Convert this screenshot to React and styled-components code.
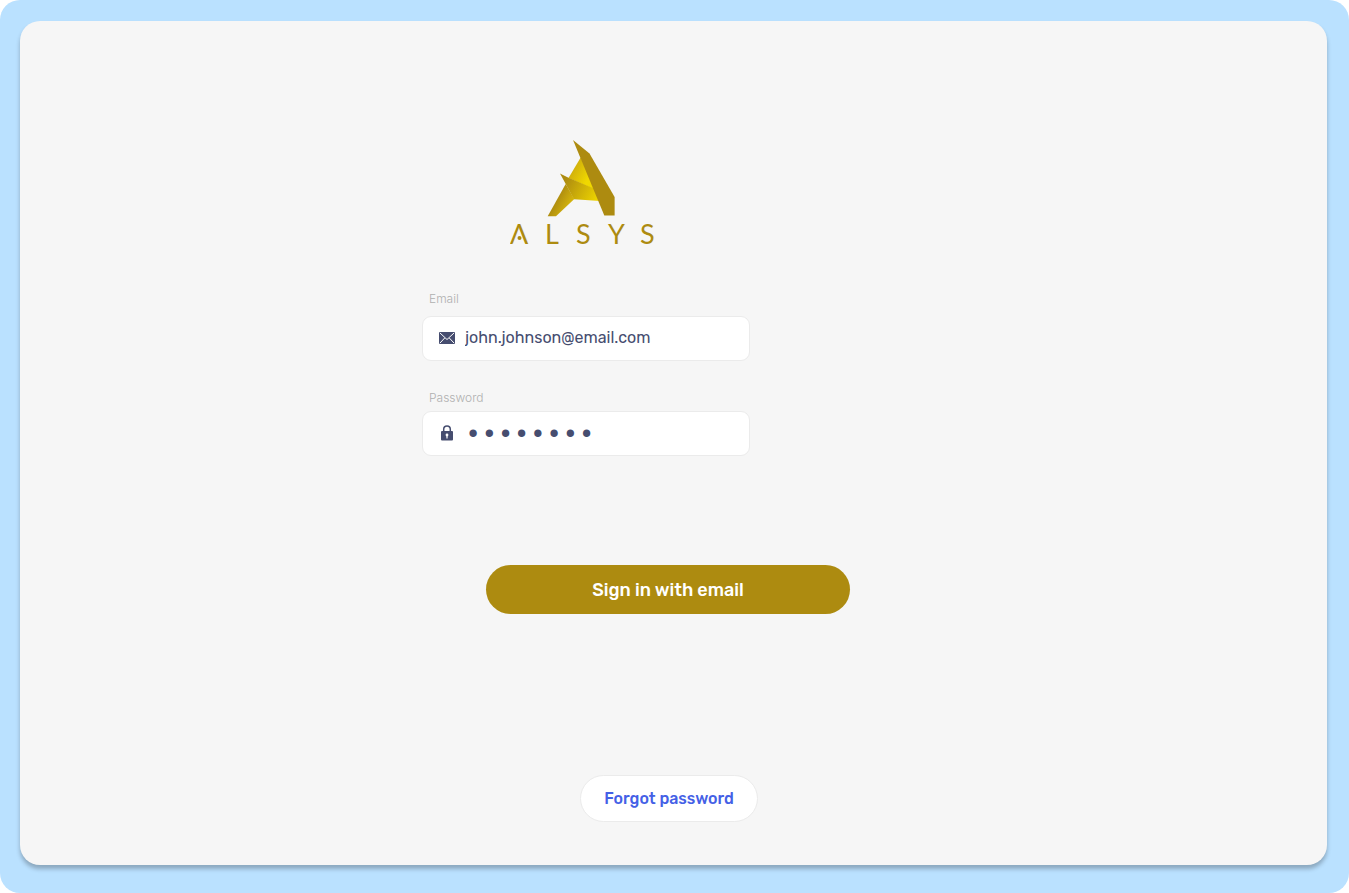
import React from "react";
import styled, { createGlobalStyle } from "styled-components";

const GlobalStyle = createGlobalStyle`
  *, *::before, *::after { box-sizing: border-box; }
  body {
    margin: 0;
    background: #ffffff;
    font-family: Rubik, Roboto, sans-serif;
  }
`;

const Frame = styled.div`
  display: flex;
  min-height: 100vh;
  padding: 21px 22px 28px 20px;
  border-radius: 20px;
  background: #bae1ff;
`;

const Panel = styled.main`
  flex: 1;
  display: flex;
  flex-direction: column;
  align-items: center;
  padding: 118px 24px 43px;
  border-radius: 20px;
  background: #f6f6f6;
  box-shadow: 0 4px 4px rgba(0, 0, 0, 0.25);
`;

const Form = styled.form`
  display: flex;
  flex-direction: column;
  align-items: flex-start;
  width: 100%;
  max-width: 503px;
`;

const Logo = styled.svg`
  display: block;
  width: 150px;
  height: 115px;
  margin: 0 0 36px 88px;
`;

const Wordmark = styled.text`
  fill: #ad8b10;
  font-family: Lato, sans-serif;
  font-size: 27px;
`;

const Field = styled.div`
  display: flex;
  flex-direction: column;
  gap: ${(p) => p.$gap};
  width: 100%;
  max-width: 328px;
  margin-bottom: ${(p) => p.$after};
`;

const Label = styled.label`
  padding-left: 7px;
  color: #b0b0b0;
  font-family: Inter, sans-serif;
  font-size: 12px;
  font-weight: 300;
  line-height: 18px;
`;

const InputBox = styled.div`
  display: flex;
  align-items: center;
  gap: 10px;
  height: 45px;
  padding: 0 16px 2px;
  border: 1px solid #ebebeb;
  border-radius: 9px;
  background: #ffffff;
`;

const FieldIcon = styled.svg`
  flex: none;
  width: 16px;
  height: 16px;
  fill: #464d6f;
`;

const Input = styled.input`
  flex: 1;
  min-width: 0;
  height: 40px;
  padding: 0;
  border: 0;
  outline: 0;
  background: transparent;
  color: #464d6f;
  font-family: inherit;
  font-size: 16px;

  &[type="password"] {
    padding-top: 4px;
    font-family: "Liberation Mono", monospace;
    font-size: 27px;
  }
`;

const Button = styled.button`
  border: 0;
  border-radius: 25px;
  font-family: inherit;
  font-weight: 500;
  cursor: pointer;
`;

const SignInButton = styled(Button)`
  width: 364px;
  height: 49px;
  margin: 109px 0 161px 64px;
  background: #ad8b10;
  color: #ffffff;
  font-size: 18px;
`;

const ForgotButton = styled(Button)`
  width: 178px;
  height: 47px;
  margin-left: 158px;
  border: 1px solid #ebebeb;
  background: #ffffff;
  color: #4460e6;
  font-size: 16px;
`;

function AlsysLogo() {
  return (
    <Logo viewBox="0 0 150 115" role="img" aria-label="ALSYS">
      <defs>
        <linearGradient id="back" x1="60" y1="30" x2="78" y2="40" gradientUnits="userSpaceOnUse">
          <stop offset="0" stopColor="#cdab0d" />
          <stop offset="1" stopColor="#f0d800" />
        </linearGradient>
        <linearGradient id="wing" x1="54" y1="42" x2="88" y2="60" gradientUnits="userSpaceOnUse">
          <stop offset="0" stopColor="#ad8b10" />
          <stop offset="1" stopColor="#eed500" />
        </linearGradient>
        <linearGradient id="leg" x1="46" y1="60" x2="59" y2="67" gradientUnits="userSpaceOnUse">
          <stop offset="0" stopColor="#ad8b10" />
          <stop offset="1" stopColor="#d3b30c" />
        </linearGradient>
      </defs>
      <path d="M70.7 18.5 L86 51 L58.5 39 Z" fill="url(#back)" />
      <path d="M55.7 45 L64.3 60 L46 77.3 H37.7 Z" fill="url(#leg)" />
      <path d="M50 34.5 L58.5 38.8 L84 49.6 L90 62 L64 60.2 Z" fill="url(#wing)" />
      <path d="M63 1 L79.5 14.5 L104.6 58 V76.6 H94.3 Z" fill="#ad8b10" />
      <Wordmark x="0 35 66 98 130" y="105">ΛLSYS</Wordmark>
      <circle cx="9.5" cy="99" r="2" fill="#ad8b10" />
    </Logo>
  );
}

function MailIcon() {
  return (
    <FieldIcon viewBox="0 0 16 16" aria-hidden="true">
      <rect y="2" width="16" height="12" rx="1" />
      <path
        d="M1 3 L8 9.5 L15 3 M1 13 L5.7 8 M15 13 L10.3 8"
        fill="none"
        stroke="#ffffff"
        strokeWidth="1"
      />
    </FieldIcon>
  );
}

function LockIcon() {
  return (
    <FieldIcon viewBox="0 0 16 16" aria-hidden="true">
      <path d="M4.7 7 V4.3 a3.3 3.3 0 0 1 6.6 0 V7" fill="none" stroke="#464d6f" strokeWidth="1.5" />
      <rect x="2" y="6" width="12" height="9.5" rx="1" />
      <circle cx="8" cy="10" r="1.4" fill="#ffffff" />
      <rect x="7.4" y="10" width="1.2" height="3.5" fill="#ffffff" />
    </FieldIcon>
  );
}

export default function App() {
  return (
    <>
      <GlobalStyle />
      <Frame>
        <Panel>
          <Form onSubmit={(e) => e.preventDefault()}>
            <AlsysLogo />
            <Field $gap="8px" $after="28px">
              <Label htmlFor="email">Email</Label>
              <InputBox>
                <MailIcon />
                <Input id="email" type="email" defaultValue="john.johnson@email.com" />
              </InputBox>
            </Field>
            <Field $gap="4px" $after="0">
              <Label htmlFor="password">Password</Label>
              <InputBox>
                <LockIcon />
                <Input id="password" type="password" defaultValue="password" />
              </InputBox>
            </Field>
            <SignInButton type="submit">Sign in with email</SignInButton>
            <ForgotButton type="button">Forgot password</ForgotButton>
          </Form>
        </Panel>
      </Frame>
    </>
  );
}
